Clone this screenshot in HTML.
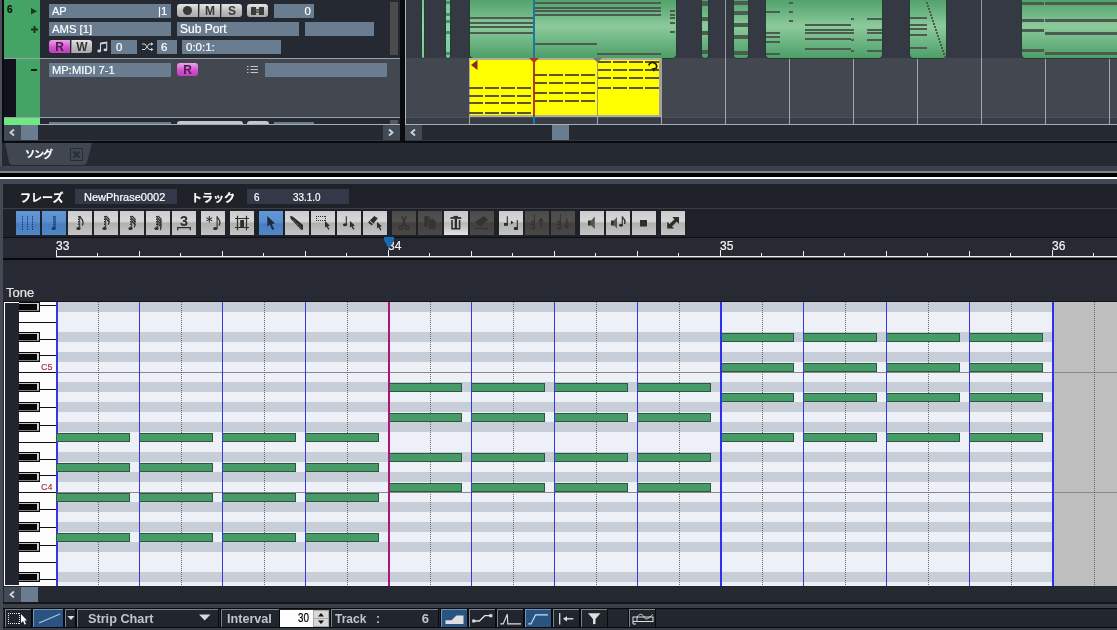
<!DOCTYPE html>
<html lang="ja"><head><meta charset="utf-8"><title>Sequencer</title>
<style>
html,body{margin:0;padding:0;background:#23262e;}
body{width:1117px;height:630px;overflow:hidden;position:relative;font-family:"Liberation Sans","Noto Sans CJK JP",sans-serif;}
#root{position:absolute;left:0;top:0;width:1117px;height:630px;overflow:hidden;background:#23262e;will-change:transform;opacity:.9999;}
#root div{position:absolute;box-sizing:border-box;}
#root svg{position:absolute;overflow:visible;}
.t{color:#fff;font-size:11.5px;line-height:14px;white-space:nowrap;-webkit-text-stroke-width:.2px;}
.fld{background:#6b7d90;}
.btn{border-radius:3px;background:linear-gradient(#e6e6e6,#bdbdbd 55%,#a9a9a9);font-weight:bold;font-size:12px;line-height:14px;overflow:hidden;text-align:center;color:#383838;}
.tb{background:linear-gradient(#cdcdcd 0%,#d8d8d8 42%,#b2b2b2 52%,#c6c6c6 100%);}
.tbh{background:linear-gradient(#c8c8c8 0%,#d0d0d0 42%,#bababa 52%,#e4e4e4 100%);}
.tbb{background:linear-gradient(#6397d6 0%,#5a90d2 45%,#4a80c2 55%,#5088c8 100%);}
.tbd{background:linear-gradient(#4d4a4a 0%,#545151 42%,#444141 52%,#4b4848 100%);}
.bb{background:#22262e;border-left:1px solid #7a828c;border-top:1px solid #7a828c;box-shadow:0 0 0 1px #0a0b0d;}
.bbb{background:#2a5583;border-left:1px solid #6f95bd;border-top:1px solid #6f95bd;box-shadow:0 0 0 1px #0a0b0d;}
.bt{color:#c2c6cb;font-weight:bold;font-size:13px;line-height:18px;white-space:nowrap;}
</style></head>
<body><div id="root">
<div style="left:0px;top:0px;width:2px;height:170px;background:#4b525c;"></div>
<div style="left:2px;top:0px;width:2px;height:143px;background:#0b0c0f;"></div>
<div style="left:4px;top:0px;width:36px;height:58px;background:#45a566;"></div>
<div style="left:40px;top:0px;width:360px;height:58px;background:#262a33;"></div>
<div style="left:4px;top:58px;width:12px;height:60px;background:#10141a;"></div>
<div style="left:16px;top:58px;width:24px;height:60px;background:#45a566;"></div>
<div style="left:40px;top:58px;width:360px;height:60px;background:#434851;"></div>
<div style="left:4px;top:58px;width:396px;height:1px;background:#9aa0a8;"></div>
<div style="left:4px;top:117px;width:396px;height:1px;background:#9aa0a8;"></div>
<div style="left:4px;top:118px;width:36px;height:7px;background:#70e884;"></div>
<div style="left:40px;top:118px;width:360px;height:7px;background:#262a33;"></div>
<div style="left:49px;top:122px;width:122px;height:3px;background:#6b7d90;"></div>
<div style="left:177px;top:121px;width:66px;height:4px;background:#c8c8c8;border-radius:3px 3px 0 0;"></div>
<div style="left:247px;top:121px;width:22px;height:4px;background:#c8c8c8;border-radius:3px 3px 0 0;"></div>
<div style="left:274px;top:122px;width:40px;height:3px;background:#6b7d90;"></div>
<div style="left:390px;top:120px;width:8px;height:4px;background:#5a5a5a;"></div>
<div class="t" style="left:7px;top:3px;color:#0a160c;font-weight:bold;font-size:10px;">6</div>
<svg style="left:31px;top:8px" width="7" height="8"><path d="M0 0 L6 3.300 L0 6.600 Z" fill="#1a3c24"/></svg>
<svg style="left:31px;top:26px" width="7" height="7"><path d="M2.5 0h2v2.5H7v2H4.5V7h-2V4.500H0v-2h2.5z" fill="#163a22"/></svg>
<div style="left:31px;top:69px;width:6px;height:2px;background:#0c2414"></div>
<div style="left:49px;top:4px;width:122px;height:13.5px;background:#6b7d90;"><div class="t" style="left:3px;top:0;font-size:11px">AP</div><div class="t" style="left:109px;top:0">|1</div></div>
<div style="left:49px;top:22px;width:122px;height:13.5px;background:#6b7d90;"><div class="t" style="left:3px;top:0;font-size:11.300px">AMS [1]</div></div>
<div style="left:177px;top:22px;width:122px;height:13.5px;background:#6b7d90;"><div class="t" style="left:3px;top:0;font-size:12px">Sub Port</div></div>
<div style="left:305px;top:22px;width:69px;height:13.5px;background:#6b7d90;"></div>
<div class="btn" style="left:177px;top:4px;width:21px;height:13px;border-radius:3px 0 0 3px;"><div style="left:6px;top:2px;width:9px;height:9px;border-radius:5px;background:#3a3a3a"></div></div>
<div class="btn" style="left:199px;top:4px;width:21px;height:13px;border-radius:0;border-left:1px solid #8a8a8a;">M</div>
<div class="btn" style="left:221px;top:4px;width:21px;height:13px;border-radius:0 3px 3px 0;border-left:1px solid #8a8a8a;">S</div>
<div class="btn" style="left:247px;top:4px;width:21px;height:13px;"><svg style="left:4px;top:3px" width="14" height="8"><path d="M0 0h5v2h3v-2h5v8h-5v-2h-3v2h-5z" fill="#3d3d3d"/><rect x="5" y="2.500" width="3" height="3" fill="#777"/></svg></div>
<div style="left:274px;top:4px;width:40px;height:13.5px;background:#6b7d90;"><div class="t" style="left:0;top:0;width:37px;text-align:right">0</div></div>
<div class="btn" style="left:49px;top:40px;width:21px;height:13px;border-radius:3px 0 0 3px;background:linear-gradient(#e9a6e6,#d04fcf 60%,#c040c0);color:#4a1a4a;">R</div>
<div class="btn" style="left:71px;top:40px;width:21px;height:13px;border-radius:0 3px 3px 0;border-left:1px solid #8a8a8a;">W</div>
<svg style="left:97px;top:41px" width="11" height="12"><path d="M3.500 10 V2.300 L9.700 1.200 V8.800" stroke="#d0d5dc" stroke-width="1.100" fill="none"/><path d="M3.500 2.800 L9.700 1.700" stroke="#d0d5dc" stroke-width="1.600"/><ellipse cx="2.200" cy="10" rx="1.900" ry="1.400" fill="#d0d5dc"/><ellipse cx="8.400" cy="8.900" rx="1.900" ry="1.400" fill="#d0d5dc"/></svg>
<div style="left:111px;top:40px;width:26px;height:13.5px;background:#6b7d90;"><div class="t" style="left:5px;top:0">0</div></div>
<svg style="left:142px;top:42px" width="12" height="10"><path d="M0 2 H3 L7 7.500 H10 M0 7.500 H3 L7 2 H10" stroke="#d0d5dc" stroke-width="1" fill="none"/><path d="M9 0.300 L11.500 2 L9 3.700 Z M9 5.800 L11.500 7.500 L9 9.200 Z" fill="#d0d5dc"/></svg>
<div style="left:157px;top:40px;width:20px;height:13.5px;background:#6b7d90;"><div class="t" style="left:4px;top:0">6</div></div>
<div style="left:182px;top:40px;width:99px;height:13.5px;background:#6b7d90;"><div class="t" style="left:4px;top:0">0:0:1:</div></div>
<div style="left:390px;top:2px;width:8px;height:53px;background:#4c4c4c;"></div>
<div style="left:49px;top:63px;width:122px;height:13.5px;background:#6b7d90;"><div class="t" style="left:3px;top:0;font-size:11.200px">MP:MIDI 7-1</div></div>
<div class="btn" style="left:177px;top:63px;width:21px;height:13px;background:linear-gradient(#e9a6e6,#d04fcf 60%,#c040c0);color:#4a1a4a;">R</div>
<svg style="left:247px;top:65px" width="12" height="10"><path d="M0 1.500h1.500M0 4.500h1.500M0 7.500h1.500M3.500 1.500h7.500M3.500 4.500h7.500M3.500 7.500h7.500" stroke="#c4cad2" stroke-width="1"/></svg>
<div style="left:265px;top:63px;width:122px;height:13.5px;background:#6b7d90;"></div>
<div style="left:40px;top:124px;width:360px;height:1px;background:#a8aeb6;"></div>
<div style="left:4px;top:125px;width:396px;height:16px;background:#262a32;"></div>
<div style="left:4px;top:125px;width:17px;height:15px;background:#434b57;"></div>
<div style="left:21px;top:125px;width:17px;height:15px;background:#6b7d90;"></div>
<div style="left:383px;top:125px;width:17px;height:15px;background:#434b57;"></div>
<div style="left:4px;top:140px;width:396px;height:1px;background:#343941;"></div>
<svg style="left:9px;top:129px" width="7" height="7"><path d="M5 0.500 L1.500 3.500 L5 6.500" stroke="#d0d6de" stroke-width="1.800" fill="none"/></svg>
<svg style="left:388px;top:129px" width="7" height="7"><path d="M1 0.500 L4.500 3.500 L1 6.500" stroke="#d0d6de" stroke-width="1.800" fill="none"/></svg>
<div style="left:400px;top:0px;width:5px;height:143px;background:#0b0c0f;"></div>
<div style="left:405px;top:0px;width:1px;height:125px;background:#b0b4ba;"></div>
<div style="left:406px;top:0px;width:711px;height:58px;background:#353a44;"></div>
<div style="left:406px;top:58px;width:711px;height:60px;background:#434851;"></div>
<div style="left:406px;top:118px;width:711px;height:7px;background:#383d47;"></div>
<div style="left:406px;top:117px;width:711px;height:1px;background:#4c515a;"></div>
<div style="left:469px;top:58px;width:1px;height:67px;background:#a4a8ae;"></div>
<div style="left:533px;top:58px;width:1px;height:67px;background:#a4a8ae;"></div>
<div style="left:597px;top:58px;width:1px;height:67px;background:#a4a8ae;"></div>
<div style="left:661px;top:58px;width:1px;height:67px;background:#a4a8ae;"></div>
<div style="left:725px;top:58px;width:1px;height:67px;background:#a4a8ae;"></div>
<div style="left:789px;top:58px;width:1px;height:67px;background:#a4a8ae;"></div>
<div style="left:853px;top:58px;width:1px;height:67px;background:#a4a8ae;"></div>
<div style="left:917px;top:58px;width:1px;height:67px;background:#a4a8ae;"></div>
<div style="left:981px;top:58px;width:1px;height:67px;background:#a4a8ae;"></div>
<div style="left:1045px;top:58px;width:1px;height:67px;background:#a4a8ae;"></div>
<div style="left:1109px;top:58px;width:1px;height:67px;background:#a4a8ae;"></div>
<div style="left:422px;top:-3px;width:2px;height:60.5px;background:linear-gradient(#74c495 0%,#8ed6ad 50%,#78c898 100%);border-radius:1px;box-shadow:0 0 0 1px #23402e;"></div>
<div style="left:446px;top:-3px;width:4px;height:60.5px;background:linear-gradient(#74c495 0%,#8ed6ad 50%,#78c898 100%);border-radius:2px;box-shadow:0 0 0 1px #23402e;"></div>
<div style="left:446px;top:1px;width:4px;height:3px;background:#4f8c68;"></div>
<div style="left:446px;top:13px;width:4px;height:3px;background:#4f8c68;"></div>
<div style="left:446px;top:20px;width:4px;height:3px;background:#4f8c68;"></div>
<div style="left:446px;top:31px;width:4px;height:3px;background:#4f8c68;"></div>
<div style="left:446px;top:52px;width:4px;height:3px;background:#4f8c68;"></div>
<div style="left:470px;top:-3px;width:206px;height:60.5px;background:linear-gradient(#4f9f68 0%,#6cb583 25%,#8fcb9c 48%,#6cb583 75%,#4f9f68 100%);border-radius:4px;box-shadow:0 0 0 1px #23402e;"></div>
<div style="left:470px;top:17px;width:63px;height:2px;background:#4c5e52;"></div>
<div style="left:470px;top:22px;width:63px;height:2px;background:#4c5e52;"></div>
<div style="left:470px;top:26px;width:63px;height:2px;background:#4c5e52;"></div>
<div style="left:470px;top:32px;width:63px;height:2px;background:#4c5e52;"></div>
<div style="left:535px;top:2px;width:126px;height:2px;background:#4c5e52;"></div>
<div style="left:535px;top:7px;width:126px;height:2px;background:#4c5e52;"></div>
<div style="left:535px;top:10px;width:126px;height:2px;background:#4c5e52;"></div>
<div style="left:535px;top:14px;width:126px;height:2px;background:#4c5e52;"></div>
<div style="left:535px;top:43px;width:62px;height:2px;background:#4c5e52;"></div>
<div style="left:597px;top:53px;width:64px;height:2px;background:#4c5e52;"></div>
<div style="left:670px;top:10px;width:5px;height:2px;background:#4c5e52;"></div>
<div style="left:670px;top:14px;width:5px;height:2px;background:#4c5e52;"></div>
<div style="left:670px;top:17px;width:5px;height:2px;background:#4c5e52;"></div>
<div style="left:670px;top:22px;width:5px;height:2px;background:#4c5e52;"></div>
<div style="left:670px;top:31px;width:5px;height:2px;background:#4c5e52;"></div>
<div style="left:702px;top:-3px;width:6px;height:60.5px;background:linear-gradient(#4f9f68 0%,#6cb583 25%,#8fcb9c 48%,#6cb583 75%,#4f9f68 100%);border-radius:3px;box-shadow:0 0 0 1px #23402e;"></div>
<div style="left:702px;top:1px;width:6px;height:5px;background:#4c5e52;"></div>
<div style="left:702px;top:17px;width:6px;height:4px;background:#4c5e52;"></div>
<div style="left:702px;top:31px;width:6px;height:4px;background:#4c5e52;"></div>
<div style="left:702px;top:50px;width:6px;height:4px;background:#4c5e52;"></div>
<div style="left:734px;top:-3px;width:14px;height:60.5px;background:linear-gradient(#4f9f68 0%,#6cb583 25%,#8fcb9c 48%,#6cb583 75%,#4f9f68 100%);border-radius:3px;box-shadow:0 0 0 1px #23402e;"></div>
<div style="left:734px;top:1px;width:14px;height:4px;background:#4c5e52;"></div>
<div style="left:734px;top:11px;width:14px;height:4px;background:#4c5e52;"></div>
<div style="left:734px;top:23px;width:14px;height:4px;background:#4c5e52;"></div>
<div style="left:734px;top:35px;width:14px;height:4px;background:#4c5e52;"></div>
<div style="left:734px;top:51px;width:14px;height:4px;background:#4c5e52;"></div>
<div style="left:766px;top:-3px;width:116px;height:60.5px;background:linear-gradient(#4f9f68 0%,#6cb583 25%,#8fcb9c 48%,#6cb583 75%,#4f9f68 100%);border-radius:4px;box-shadow:0 0 0 1px #23402e;"></div>
<div style="left:766px;top:11px;width:14px;height:2px;background:#4c5e52;"></div>
<div style="left:766px;top:32px;width:14px;height:2px;background:#4c5e52;"></div>
<div style="left:766px;top:36px;width:14px;height:2px;background:#4c5e52;"></div>
<div style="left:766px;top:41px;width:14px;height:2px;background:#4c5e52;"></div>
<div style="left:766px;top:53px;width:14px;height:2px;background:#4c5e52;"></div>
<div style="left:789px;top:2px;width:4px;height:2px;background:#4c5e52;"></div>
<div style="left:789px;top:11px;width:4px;height:2px;background:#4c5e52;"></div>
<div style="left:789px;top:20px;width:4px;height:2px;background:#4c5e52;"></div>
<div style="left:805px;top:24px;width:46px;height:2px;background:#4c5e52;"></div>
<div style="left:805px;top:29px;width:46px;height:2px;background:#4c5e52;"></div>
<div style="left:805px;top:32px;width:46px;height:2px;background:#4c5e52;"></div>
<div style="left:805px;top:38px;width:46px;height:2px;background:#4c5e52;"></div>
<div style="left:805px;top:48px;width:46px;height:2px;background:#4c5e52;"></div>
<div style="left:851px;top:18px;width:3px;height:2px;background:#4c5e52;"></div>
<div style="left:851px;top:29px;width:3px;height:2px;background:#4c5e52;"></div>
<div style="left:851px;top:32px;width:3px;height:2px;background:#4c5e52;"></div>
<div style="left:851px;top:39px;width:3px;height:2px;background:#4c5e52;"></div>
<div style="left:851px;top:50px;width:3px;height:2px;background:#4c5e52;"></div>
<div style="left:867px;top:18px;width:15px;height:2px;background:#4c5e52;"></div>
<div style="left:867px;top:29px;width:15px;height:2px;background:#4c5e52;"></div>
<div style="left:867px;top:32px;width:15px;height:2px;background:#4c5e52;"></div>
<div style="left:867px;top:39px;width:15px;height:2px;background:#4c5e52;"></div>
<div style="left:867px;top:50px;width:15px;height:2px;background:#4c5e52;"></div>
<div style="left:910px;top:-3px;width:36px;height:60.5px;background:linear-gradient(#4f9f68 0%,#6cb583 25%,#8fcb9c 48%,#6cb583 75%,#4f9f68 100%);border-radius:4px;box-shadow:0 0 0 1px #23402e;"></div>
<div style="left:910px;top:17px;width:17px;height:2px;background:#4c5e52;"></div>
<div style="left:910px;top:24px;width:17px;height:2px;background:#4c5e52;"></div>
<div style="left:910px;top:28px;width:17px;height:2px;background:#4c5e52;"></div>
<div style="left:910px;top:34px;width:17px;height:2px;background:#4c5e52;"></div>
<div style="left:910px;top:47px;width:17px;height:2px;background:#4c5e52;"></div>
<div style="left:926px;top:2px;width:2px;height:2px;background:#4c5e52;"></div>
<div style="left:927px;top:5px;width:2px;height:2px;background:#4c5e52;"></div>
<div style="left:928px;top:8px;width:2px;height:2px;background:#4c5e52;"></div>
<div style="left:929px;top:11px;width:2px;height:2px;background:#4c5e52;"></div>
<div style="left:930px;top:14px;width:2px;height:2px;background:#4c5e52;"></div>
<div style="left:931px;top:17px;width:2px;height:2px;background:#4c5e52;"></div>
<div style="left:932px;top:20px;width:2px;height:2px;background:#4c5e52;"></div>
<div style="left:933px;top:23px;width:2px;height:2px;background:#4c5e52;"></div>
<div style="left:934px;top:26px;width:2px;height:2px;background:#4c5e52;"></div>
<div style="left:935px;top:29px;width:2px;height:2px;background:#4c5e52;"></div>
<div style="left:936px;top:32px;width:2px;height:2px;background:#4c5e52;"></div>
<div style="left:937px;top:35px;width:2px;height:2px;background:#4c5e52;"></div>
<div style="left:938px;top:38px;width:2px;height:2px;background:#4c5e52;"></div>
<div style="left:939px;top:41px;width:2px;height:2px;background:#4c5e52;"></div>
<div style="left:940px;top:44px;width:2px;height:2px;background:#4c5e52;"></div>
<div style="left:941px;top:47px;width:2px;height:2px;background:#4c5e52;"></div>
<div style="left:942px;top:50px;width:2px;height:2px;background:#4c5e52;"></div>
<div style="left:943px;top:53px;width:2px;height:2px;background:#4c5e52;"></div>
<div style="left:944px;top:56px;width:2px;height:2px;background:#4c5e52;"></div>
<div style="left:1022px;top:-3px;width:110px;height:60.5px;background:linear-gradient(#4f9f68 0%,#6cb583 25%,#8fcb9c 48%,#6cb583 75%,#4f9f68 100%);border-radius:4px;box-shadow:0 0 0 1px #23402e;"></div>
<div style="left:1022px;top:2px;width:22px;height:3px;background:#4c5e52;"></div>
<div style="left:1022px;top:19px;width:22px;height:3px;background:#4c5e52;"></div>
<div style="left:1022px;top:29px;width:22px;height:3px;background:#4c5e52;"></div>
<div style="left:1022px;top:49px;width:22px;height:3px;background:#4c5e52;"></div>
<div style="left:1045px;top:2px;width:72px;height:3px;background:#4c5e52;"></div>
<div style="left:1045px;top:19px;width:72px;height:3px;background:#4c5e52;"></div>
<div style="left:1045px;top:32px;width:72px;height:3px;background:#4c5e52;"></div>
<div style="left:1045px;top:52px;width:72px;height:3px;background:#4c5e52;"></div>
<div style="left:725px;top:0px;width:1px;height:58px;background:#9498a0;"></div>
<div style="left:981px;top:0px;width:1px;height:58px;background:#9498a0;"></div>
<div style="left:469px;top:58px;width:193px;height:59px;background:#ffff00;border:1px solid #a8a8a0;border-top:2px solid #b0b09a;border-bottom:2px solid #b0b09a;border-right:3px solid #a4a498;"></div>
<div style="left:469px;top:87px;width:14px;height:2px;background:#5e5622;"></div>
<div style="left:485px;top:87px;width:14px;height:2px;background:#5e5622;"></div>
<div style="left:501px;top:87px;width:14px;height:2px;background:#5e5622;"></div>
<div style="left:517px;top:87px;width:14px;height:2px;background:#5e5622;"></div>
<div style="left:469px;top:95px;width:14px;height:2px;background:#5e5622;"></div>
<div style="left:485px;top:95px;width:14px;height:2px;background:#5e5622;"></div>
<div style="left:501px;top:95px;width:14px;height:2px;background:#5e5622;"></div>
<div style="left:517px;top:95px;width:14px;height:2px;background:#5e5622;"></div>
<div style="left:469px;top:102px;width:14px;height:2px;background:#5e5622;"></div>
<div style="left:485px;top:102px;width:14px;height:2px;background:#5e5622;"></div>
<div style="left:501px;top:102px;width:14px;height:2px;background:#5e5622;"></div>
<div style="left:517px;top:102px;width:14px;height:2px;background:#5e5622;"></div>
<div style="left:469px;top:112px;width:14px;height:2px;background:#5e5622;"></div>
<div style="left:485px;top:112px;width:14px;height:2px;background:#5e5622;"></div>
<div style="left:501px;top:112px;width:14px;height:2px;background:#5e5622;"></div>
<div style="left:517px;top:112px;width:14px;height:2px;background:#5e5622;"></div>
<div style="left:533px;top:74px;width:14px;height:2px;background:#5e5622;"></div>
<div style="left:549px;top:74px;width:14px;height:2px;background:#5e5622;"></div>
<div style="left:565px;top:74px;width:14px;height:2px;background:#5e5622;"></div>
<div style="left:581px;top:74px;width:14px;height:2px;background:#5e5622;"></div>
<div style="left:533px;top:82px;width:14px;height:2px;background:#5e5622;"></div>
<div style="left:549px;top:82px;width:14px;height:2px;background:#5e5622;"></div>
<div style="left:565px;top:82px;width:14px;height:2px;background:#5e5622;"></div>
<div style="left:581px;top:82px;width:14px;height:2px;background:#5e5622;"></div>
<div style="left:533px;top:92px;width:14px;height:2px;background:#5e5622;"></div>
<div style="left:549px;top:92px;width:14px;height:2px;background:#5e5622;"></div>
<div style="left:565px;top:92px;width:14px;height:2px;background:#5e5622;"></div>
<div style="left:581px;top:92px;width:14px;height:2px;background:#5e5622;"></div>
<div style="left:533px;top:100px;width:14px;height:2px;background:#5e5622;"></div>
<div style="left:549px;top:100px;width:14px;height:2px;background:#5e5622;"></div>
<div style="left:565px;top:100px;width:14px;height:2px;background:#5e5622;"></div>
<div style="left:581px;top:100px;width:14px;height:2px;background:#5e5622;"></div>
<div style="left:597px;top:61px;width:14px;height:2px;background:#5e5622;"></div>
<div style="left:613px;top:61px;width:14px;height:2px;background:#5e5622;"></div>
<div style="left:629px;top:61px;width:14px;height:2px;background:#5e5622;"></div>
<div style="left:645px;top:61px;width:14px;height:2px;background:#5e5622;"></div>
<div style="left:597px;top:69px;width:14px;height:2px;background:#5e5622;"></div>
<div style="left:613px;top:69px;width:14px;height:2px;background:#5e5622;"></div>
<div style="left:629px;top:69px;width:14px;height:2px;background:#5e5622;"></div>
<div style="left:645px;top:69px;width:14px;height:2px;background:#5e5622;"></div>
<div style="left:597px;top:77px;width:14px;height:2px;background:#5e5622;"></div>
<div style="left:613px;top:77px;width:14px;height:2px;background:#5e5622;"></div>
<div style="left:629px;top:77px;width:14px;height:2px;background:#5e5622;"></div>
<div style="left:645px;top:77px;width:14px;height:2px;background:#5e5622;"></div>
<div style="left:597px;top:87px;width:14px;height:2px;background:#5e5622;"></div>
<div style="left:613px;top:87px;width:14px;height:2px;background:#5e5622;"></div>
<div style="left:629px;top:87px;width:14px;height:2px;background:#5e5622;"></div>
<div style="left:645px;top:87px;width:14px;height:2px;background:#5e5622;"></div>
<div style="left:597px;top:59px;width:1px;height:57px;background:#9a9a80;"></div>
<div style="left:533px;top:0px;width:2px;height:125px;background:#1a7aa0;"></div>
<div style="left:533px;top:59px;width:2px;height:57px;background:#b83c1c;"></div>
<svg style="left:471px;top:60px" width="7" height="11"><path d="M6.500 0 L0 5 L6.500 10 Z" fill="#8a2a2a"/></svg>
<svg style="left:529px;top:58px" width="10" height="5"><path d="M0 0 H10 L5 5 Z" fill="#c03020"/></svg>
<svg style="left:593px;top:58px" width="9" height="5"><path d="M0 0 H9 L4.500 4.500 Z" fill="#777"/></svg>
<svg style="left:647px;top:60px" width="12" height="12"><path d="M1.800 5.500 A4 3.800 0 1 1 8.500 9" stroke="#1a1a1a" stroke-width="1.700" fill="none"/><path d="M4.500 8.300 L8.800 7.800 L7 11.800 Z" fill="#1a1a1a"/></svg>
<div style="left:405px;top:124px;width:712px;height:1px;background:#a8aeb6;"></div>
<div style="left:405px;top:125px;width:712px;height:16px;background:#262a32;"></div>
<div style="left:405px;top:125px;width:17px;height:15px;background:#434b57;"></div>
<div style="left:552px;top:125px;width:17px;height:15px;background:#6b7d90;"></div>
<div style="left:405px;top:140px;width:712px;height:1px;background:#343941;"></div>
<svg style="left:410px;top:129px" width="7" height="7"><path d="M5 0.500 L1.500 3.500 L5 6.500" stroke="#d0d6de" stroke-width="1.800" fill="none"/></svg>
<div style="left:2px;top:141px;width:1115px;height:2px;background:#0b0c0f;"></div>
<div style="left:2px;top:143px;width:1115px;height:23px;background:#262a32;"></div>
<svg style="left:0;top:143px" width="100" height="23"><path d="M5 0 H92 L87 19 Q86 22 83 22 H13 Q10 22 9 19 Z" fill="#414851"/><rect x="70.500" y="5.500" width="12" height="12" fill="none" stroke="#2a2f37"/><path d="M73.500 8.500 L79.500 14.500 M79.500 8.500 L73.500 14.500" stroke="#2a2f37" stroke-width="2"/></svg>
<div class="t" style="left:25px;top:148px;font-size:10px;line-height:14px;letter-spacing:-1px;font-weight:bold">ソング</div>
<div style="left:0px;top:166px;width:1117px;height:5px;background:#3c434c;"></div>
<div style="left:0px;top:171px;width:1117px;height:2px;background:#7c8894;"></div>
<div style="left:0px;top:173px;width:1117px;height:4px;background:#000;"></div>
<div style="left:0px;top:177px;width:1117px;height:2px;background:#fff;"></div>
<div style="left:0px;top:179px;width:1117px;height:5px;background:#434b55;"></div>
<div style="left:0px;top:184px;width:3px;height:446px;background:#454c56;"></div>
<div style="left:3px;top:184px;width:1114px;height:446px;background:#23262e;"></div>
<div style="left:3px;top:184px;width:1114px;height:54px;background:#1f2229;"></div>
<div class="t" style="left:20px;top:191px;font-size:11px;font-weight:bold;letter-spacing:0px;">フレーズ</div>
<div style="left:75px;top:189px;width:102px;height:15px;background:#343a4a;"><div class="t" style="left:9px;top:1px;font-size:11px;line-height:15px;">NewPhrase0002</div></div>
<div class="t" style="left:191px;top:191px;font-size:11px;font-weight:bold;">トラック</div>
<div style="left:247px;top:189px;width:102px;height:15px;background:#343a4a;"><div class="t" style="left:7px;top:1px;font-size:11px;line-height:15px;transform:scaleX(.9);transform-origin:0 0;">6</div><div class="t" style="left:46px;top:1px;font-size:11px;line-height:15px;transform:scaleX(.9);transform-origin:0 0;">33.1.0</div></div>
<div style="left:3px;top:208px;width:1114px;height:1px;background:#3a3f48;"></div>
<div style="left:3px;top:237px;width:1114px;height:1px;background:#0e0f13;"></div>
<div style="left:3px;top:259px;width:1114px;height:1px;background:#0e0f13;"></div>
<div class="tbb" style="left:16px;top:211px;width:24px;height:24px;"><svg width="24" height="24" style="left:0;top:0"><path d="M6.500 5v14.500M11.500 5v14.500M16.500 5v14.500" stroke="#1d3a68" stroke-width="1" stroke-dasharray="1.500 1"/></svg></div>
<div class="tbb" style="left:42px;top:211px;width:24px;height:24px;"><svg width="24" height="24" style="left:0;top:0"><path d="M11.500 5v12" stroke="#1d3a68" stroke-width="1" stroke-dasharray="1.500 1"/><path d="M13 5v12.500" stroke="#1d3a68" stroke-width="1.200"/><ellipse cx="11.700" cy="17.600" rx="2.100" ry="1.500" fill="#1d3a68"/></svg></div>
<div class="tb" style="left:68px;top:211px;width:24px;height:24px;"><svg width="24" height="24" style="left:0;top:0"><path d="M10.500 5v10.500" stroke="#2e2e2e" stroke-width="1" stroke-dasharray="1.500 1"/><path d="M11.700 5v12" stroke="#2e2e2e" stroke-width="1"/><ellipse cx="10.500" cy="17.400" rx="2.100" ry="1.500" fill="#2e2e2e"/><path d="M12 5.200 C12.500 8 17 9 14.300 14.500" stroke="#2e2e2e" stroke-width="1.300" fill="none"/></svg></div>
<div class="tb" style="left:94px;top:211px;width:24px;height:24px;"><svg width="24" height="24" style="left:0;top:0"><path d="M10.500 5v10.500" stroke="#2e2e2e" stroke-width="1" stroke-dasharray="1.500 1"/><path d="M11.700 5v12" stroke="#2e2e2e" stroke-width="1"/><ellipse cx="10.500" cy="17.400" rx="2.100" ry="1.500" fill="#2e2e2e"/><path d="M12 4.8 L15.200 8.4 L14.300 11.2" stroke="#2e2e2e" stroke-width="1.200" fill="none"/><path d="M12 7.4 L15.200 11.0 L14.300 13.8" stroke="#2e2e2e" stroke-width="1.200" fill="none"/></svg></div>
<div class="tb" style="left:120px;top:211px;width:24px;height:24px;"><svg width="24" height="24" style="left:0;top:0"><path d="M10.500 5v10.500" stroke="#2e2e2e" stroke-width="1" stroke-dasharray="1.500 1"/><path d="M11.700 5v12" stroke="#2e2e2e" stroke-width="1"/><ellipse cx="10.500" cy="17.400" rx="2.100" ry="1.500" fill="#2e2e2e"/><path d="M12 4.8 L15.200 8.4 L14.300 11.2" stroke="#2e2e2e" stroke-width="1.200" fill="none"/><path d="M12 7.4 L15.200 11.0 L14.300 13.8" stroke="#2e2e2e" stroke-width="1.200" fill="none"/><path d="M12 10.0 L15.200 13.6 L14.300 16.4" stroke="#2e2e2e" stroke-width="1.200" fill="none"/></svg></div>
<div class="tb" style="left:146px;top:211px;width:24px;height:24px;"><svg width="24" height="24" style="left:0;top:0"><path d="M10.500 5v10.500" stroke="#2e2e2e" stroke-width="1" stroke-dasharray="1.500 1"/><path d="M11.700 5v12" stroke="#2e2e2e" stroke-width="1"/><ellipse cx="10.500" cy="17.400" rx="2.100" ry="1.500" fill="#2e2e2e"/><path d="M12 4.8 L15.200 8.4 L14.300 11.2" stroke="#2e2e2e" stroke-width="1.200" fill="none"/><path d="M12 7.4 L15.200 11.0 L14.300 13.8" stroke="#2e2e2e" stroke-width="1.200" fill="none"/><path d="M12 10.0 L15.200 13.6 L14.300 16.4" stroke="#2e2e2e" stroke-width="1.200" fill="none"/><path d="M12 12.6 L15.200 16.2 L14.300 19.0" stroke="#2e2e2e" stroke-width="1.200" fill="none"/></svg></div>
<div class="tb" style="left:172px;top:211px;width:24px;height:24px;"><svg width="24" height="24" style="left:0;top:0"><text x="12" y="14.500" font-size="14.500" font-weight="bold" text-anchor="middle" fill="#2e2e2e" font-family="Liberation Sans,sans-serif">3</text><path d="M5.700 19.200V16.700h12.600V19.200" stroke="#2e2e2e" stroke-width="1.300" fill="none"/></svg></div>
<div class="tb" style="left:201px;top:211px;width:24px;height:24px;"><svg width="24" height="24" style="left:0;top:0"><path d="M8.300 5v6.500M5.300 6.700l6 3.200M11.300 6.700l-6 3.200" stroke="#2e2e2e" stroke-width="1"/><path d="M16.100 5.500v12" stroke="#2e2e2e" stroke-width="1.100"/><ellipse cx="14.300" cy="17.500" rx="2.300" ry="1.500" fill="#2e2e2e"/><path d="M16.200 5.500 C16.500 8.500 21 9 18 14.500" stroke="#2e2e2e" stroke-width="1.300" fill="none"/></svg></div>
<div class="tb" style="left:230px;top:211px;width:24px;height:24px;"><svg width="24" height="24" style="left:0;top:0"><path d="M5 7.500h14M5 16.500h14M7.500 4.800v14.400M16.500 4.800v14.400" stroke="#2e2e2e" stroke-width="1.200"/><rect x="10.200" y="9" width="3.800" height="7" fill="#2e2e2e"/></svg></div>
<div class="tbb" style="left:259px;top:211px;width:24px;height:24px;"><svg width="24" height="24" style="left:0;top:0"><path d="M8.300 5 L8.300 15.800 L10.700 13.600 L13.300 19 L15.200 18.100 L12.700 12.900 L16 12.400 Z" fill="#23283a"/></svg></div>
<div class="tb" style="left:285px;top:211px;width:24px;height:24px;"><svg width="24" height="24" style="left:0;top:0"><path d="M5 5 L7.800 5.600 L18 14 V18.700 H16 L5.600 7.800 Z" fill="#2e2e2e"/><path d="M8 9 L16.500 17.800" stroke="#999" stroke-width=".8" stroke-dasharray="1 1"/></svg></div>
<div class="tb" style="left:311px;top:211px;width:24px;height:24px;"><svg width="24" height="24" style="left:0;top:0"><path d="M5 5.500h10M5 9.500h10" stroke="#2e2e2e" stroke-width="1" stroke-dasharray="1 1" shape-rendering="crispEdges"/><path d="M5.500 5v5M14.500 5v5" stroke="#2e2e2e" stroke-width="1" stroke-dasharray="1 1" shape-rendering="crispEdges"/><path d="M14 10 L14 16.8 L15.6 15.4 L17.2 18.8 L18.4 18.2 L16.9 15 L19 14.7 Z" fill="#2e2e2e"/></svg></div>
<div class="tb" style="left:337px;top:211px;width:24px;height:24px;"><svg width="24" height="24" style="left:0;top:0"><path d="M9.300 5.200v9" stroke="#2e2e2e" stroke-width="1.100"/><ellipse cx="8" cy="13.800" rx="2.100" ry="1.500" fill="#2e2e2e"/><path d="M13 10 L13 16.8 L14.6 15.4 L16.2 18.8 L17.4 18.2 L15.9 15 L18 14.7 Z" fill="#2e2e2e"/></svg></div>
<div class="tb" style="left:363px;top:211px;width:24px;height:24px;"><svg width="24" height="24" style="left:0;top:0"><path d="M11.200 5 L14.800 7.300 L8.800 14.600 L5 11.600 Z" fill="#2e2e2e"/><path d="M6.800 10 L10.300 12.800" stroke="#ddd" stroke-width=".9"/><path d="M14 10.8 L14 17.6 L15.6 16.200000000000003 L17.2 19.6 L18.4 19.0 L16.9 15.8 L19 15.5 Z" fill="#2e2e2e"/></svg></div>
<div class="tbd" style="left:392px;top:211px;width:24px;height:24px;"><svg width="24" height="24" style="left:0;top:0"><path d="M10 5.200 L13.400 15 M14 5.200 L10.600 15" stroke="#353333" stroke-width="1.500"/><circle cx="9" cy="16.600" r="1.800" fill="none" stroke="#353333" stroke-width="1.300"/><circle cx="15.200" cy="16.600" r="1.800" fill="none" stroke="#353333" stroke-width="1.300"/></svg></div>
<div class="tbd" style="left:418px;top:211px;width:24px;height:24px;"><svg width="24" height="24" style="left:0;top:0"><path d="M6.300 5.200h4.200l1.800 1.800v8.500h-6z" fill="#353333"/><path d="M10.500 8h4.800l2.700 2.700v7.500h-7.500z" fill="#353333" stroke="#4b4848" stroke-width=".7"/></svg></div>
<div class="tbh" style="left:444px;top:211px;width:24px;height:24px;"><svg width="24" height="24" style="left:0;top:0"><path d="M6.500 7h10.700" stroke="#2e2e2e" stroke-width="1.800"/><path d="M9.500 5.500h4.500" stroke="#2e2e2e" stroke-width="1.200"/><path d="M8 9v8.800h7.600V9" stroke="#2e2e2e" stroke-width="1.600" fill="none"/><rect x="10.700" y="7.500" width="2.300" height="10.500" fill="#2e2e2e"/></svg></div>
<div class="tbd" style="left:470px;top:211px;width:24px;height:24px;"><svg width="24" height="24" style="left:0;top:0"><path d="M14 5 L18 9 L10.500 15.500 L5 11 Z" fill="#353333"/><path d="M4.500 17.500h13.500" stroke="#353333" stroke-width="1.200"/></svg></div>
<div class="tb" style="left:499px;top:211px;width:24px;height:24px;"><svg width="24" height="24" style="left:0;top:0"><path d="M8.300 5.200v9" stroke="#2e2e2e" stroke-width="1.100"/><rect x="5" y="12" width="3.800" height="2.800" fill="#2e2e2e"/><path d="M12 9.500 l2.600 2 l-2.600 2z" fill="#2e2e2e"/><path d="M18.300 9v9.500" stroke="#2e2e2e" stroke-width="1.100"/><rect x="15" y="16" width="3.800" height="3" fill="#2e2e2e"/></svg></div>
<div class="tbd" style="left:525px;top:211px;width:24px;height:24px;"><svg width="24" height="24" style="left:0;top:0"><path d="M9.300 3v16" stroke="#353333" stroke-width="1"/><path d="M6.300 10.700h3M6.300 13.700h3M6.300 17.500h3" stroke="#353333" stroke-width="1.700"/><path d="M15.900 16.500V8M13.600 10.600l2.300-2.800l2.300 2.800" stroke="#353333" stroke-width="1.300" fill="none"/></svg></div>
<div class="tbd" style="left:551px;top:211px;width:24px;height:24px;"><svg width="24" height="24" style="left:0;top:0"><path d="M9.300 3v16" stroke="#353333" stroke-width="1"/><path d="M6.300 10.700h3M6.300 13.700h3M6.300 17.500h3" stroke="#353333" stroke-width="1.700"/><path d="M15.900 7.500v9M13.600 13.900l2.300 2.800l2.300-2.800" stroke="#353333" stroke-width="1.300" fill="none"/></svg></div>
<div class="tb" style="left:580px;top:211px;width:24px;height:24px;"><svg width="24" height="24" style="left:0;top:0"><rect x="8" y="9.500" width="3.300" height="5" fill="#2e2e2e"/><path d="M10.500 10.200 L14.800 5.500 V18 L10.500 13.800 Z" fill="#555"/></svg></div>
<div class="tb" style="left:606px;top:211px;width:24px;height:24px;"><svg width="24" height="24" style="left:0;top:0"><rect x="5" y="9.500" width="3" height="5" fill="#2e2e2e"/><path d="M7.500 10 L11 6 V17.500 L7.500 14 Z" fill="#555"/><path d="M16.300 5.500v9" stroke="#2e2e2e" stroke-width="1.100"/><ellipse cx="15" cy="14.300" rx="2" ry="1.400" fill="#2e2e2e"/><path d="M16.400 5.500 C16.600 8 21 8.500 18.500 13" stroke="#2e2e2e" stroke-width="1.200" fill="none"/></svg></div>
<div class="tb" style="left:632px;top:211px;width:24px;height:24px;"><svg width="24" height="24" style="left:0;top:0"><rect x="8" y="9" width="7" height="6.500" fill="#2e2e2e"/></svg></div>
<div class="tb" style="left:661px;top:211px;width:24px;height:24px;"><svg width="24" height="24" style="left:0;top:0"><path d="M11.200 6 H18 V13 Z M6.200 10.800 V17.500 H13.200 Z" fill="#2e2e2e"/><path d="M8.500 15.500 L16 8" stroke="#2e2e2e" stroke-width="3.200"/></svg></div>
<div style="left:3px;top:238px;width:1114px;height:21px;background:#282b33;"></div>
<div style="left:3px;top:260px;width:1114px;height:41px;background:#282b33;"></div>
<div style="left:3px;top:301px;width:1114px;height:1px;background:#14161a;"></div>
<div style="left:56px;top:256px;width:1061px;height:1px;background:#f0f0f0;"></div>
<div style="left:56px;top:257px;width:1061px;height:1px;background:#6a6c70;"></div>
<div style="left:3px;top:258px;width:1114px;height:2px;background:#0a0b0e;"></div>
<div style="left:56px;top:250px;width:1px;height:7px;background:#f0f0f0;"></div>
<div class="t" style="left:56px;top:240px;font-size:12px;line-height:12px;color:#f4f4f4;">33</div>
<div style="left:97px;top:253px;width:1px;height:4px;background:#f0f0f0;"></div>
<div style="left:139px;top:251px;width:1px;height:6px;background:#f0f0f0;"></div>
<div style="left:180px;top:253px;width:1px;height:4px;background:#f0f0f0;"></div>
<div style="left:222px;top:251px;width:1px;height:6px;background:#f0f0f0;"></div>
<div style="left:263px;top:253px;width:1px;height:4px;background:#f0f0f0;"></div>
<div style="left:305px;top:251px;width:1px;height:6px;background:#f0f0f0;"></div>
<div style="left:346px;top:253px;width:1px;height:4px;background:#f0f0f0;"></div>
<div style="left:388px;top:250px;width:1px;height:7px;background:#f0f0f0;"></div>
<div class="t" style="left:388px;top:240px;font-size:12px;line-height:12px;color:#f4f4f4;">34</div>
<div style="left:429px;top:253px;width:1px;height:4px;background:#f0f0f0;"></div>
<div style="left:471px;top:251px;width:1px;height:6px;background:#f0f0f0;"></div>
<div style="left:512px;top:253px;width:1px;height:4px;background:#f0f0f0;"></div>
<div style="left:554px;top:251px;width:1px;height:6px;background:#f0f0f0;"></div>
<div style="left:595px;top:253px;width:1px;height:4px;background:#f0f0f0;"></div>
<div style="left:637px;top:251px;width:1px;height:6px;background:#f0f0f0;"></div>
<div style="left:678px;top:253px;width:1px;height:4px;background:#f0f0f0;"></div>
<div style="left:720px;top:250px;width:1px;height:7px;background:#f0f0f0;"></div>
<div class="t" style="left:720px;top:240px;font-size:12px;line-height:12px;color:#f4f4f4;">35</div>
<div style="left:761px;top:253px;width:1px;height:4px;background:#f0f0f0;"></div>
<div style="left:803px;top:251px;width:1px;height:6px;background:#f0f0f0;"></div>
<div style="left:844px;top:253px;width:1px;height:4px;background:#f0f0f0;"></div>
<div style="left:886px;top:251px;width:1px;height:6px;background:#f0f0f0;"></div>
<div style="left:927px;top:253px;width:1px;height:4px;background:#f0f0f0;"></div>
<div style="left:969px;top:251px;width:1px;height:6px;background:#f0f0f0;"></div>
<div style="left:1010px;top:253px;width:1px;height:4px;background:#f0f0f0;"></div>
<div style="left:1052px;top:250px;width:1px;height:7px;background:#f0f0f0;"></div>
<div class="t" style="left:1052px;top:240px;font-size:12px;line-height:12px;color:#f4f4f4;">36</div>
<div style="left:1093px;top:253px;width:1px;height:4px;background:#f0f0f0;"></div>
<svg style="left:384px;top:237px" width="10" height="12"><path d="M0 0 H10 V3 L5 12 L0 3 Z" fill="#1c6cb4"/></svg>
<div class="t" style="left:6px;top:286px;font-size:13px;line-height:14px;color:#e8e8e8;">Tone</div>
<div style="left:56px;top:302px;width:996px;height:284px;background:#eef1f8;"></div>
<div style="left:1052px;top:302px;width:65px;height:284px;background:#c0c0c0;"></div>
<div style="left:56px;top:302px;width:996px;height:10px;background:#c9cfd9;"></div>
<div style="left:56px;top:332px;width:996px;height:10px;background:#c9cfd9;"></div>
<div style="left:56px;top:352px;width:996px;height:10px;background:#c9cfd9;"></div>
<div style="left:56px;top:382px;width:996px;height:10px;background:#c9cfd9;"></div>
<div style="left:56px;top:402px;width:996px;height:10px;background:#c9cfd9;"></div>
<div style="left:56px;top:422px;width:996px;height:10px;background:#c9cfd9;"></div>
<div style="left:56px;top:452px;width:996px;height:10px;background:#c9cfd9;"></div>
<div style="left:56px;top:472px;width:996px;height:10px;background:#c9cfd9;"></div>
<div style="left:56px;top:502px;width:996px;height:10px;background:#c9cfd9;"></div>
<div style="left:56px;top:522px;width:996px;height:10px;background:#c9cfd9;"></div>
<div style="left:56px;top:542px;width:996px;height:10px;background:#c9cfd9;"></div>
<div style="left:56px;top:572px;width:996px;height:10px;background:#c9cfd9;"></div>
<div style="left:56px;top:372px;width:1061px;height:1px;background:#8a8a8a;"></div>
<div style="left:56px;top:492px;width:1061px;height:1px;background:#8a8a8a;"></div>
<div style="left:98px;top:302px;width:1px;height:284px;background:repeating-linear-gradient(#6a6a6a 0 1px,transparent 1px 2px);"></div>
<div style="left:181px;top:302px;width:1px;height:284px;background:repeating-linear-gradient(#6a6a6a 0 1px,transparent 1px 2px);"></div>
<div style="left:264px;top:302px;width:1px;height:284px;background:repeating-linear-gradient(#6a6a6a 0 1px,transparent 1px 2px);"></div>
<div style="left:347px;top:302px;width:1px;height:284px;background:repeating-linear-gradient(#6a6a6a 0 1px,transparent 1px 2px);"></div>
<div style="left:430px;top:302px;width:1px;height:284px;background:repeating-linear-gradient(#6a6a6a 0 1px,transparent 1px 2px);"></div>
<div style="left:513px;top:302px;width:1px;height:284px;background:repeating-linear-gradient(#6a6a6a 0 1px,transparent 1px 2px);"></div>
<div style="left:596px;top:302px;width:1px;height:284px;background:repeating-linear-gradient(#6a6a6a 0 1px,transparent 1px 2px);"></div>
<div style="left:679px;top:302px;width:1px;height:284px;background:repeating-linear-gradient(#6a6a6a 0 1px,transparent 1px 2px);"></div>
<div style="left:762px;top:302px;width:1px;height:284px;background:repeating-linear-gradient(#6a6a6a 0 1px,transparent 1px 2px);"></div>
<div style="left:845px;top:302px;width:1px;height:284px;background:repeating-linear-gradient(#6a6a6a 0 1px,transparent 1px 2px);"></div>
<div style="left:928px;top:302px;width:1px;height:284px;background:repeating-linear-gradient(#6a6a6a 0 1px,transparent 1px 2px);"></div>
<div style="left:1011px;top:302px;width:1px;height:284px;background:repeating-linear-gradient(#6a6a6a 0 1px,transparent 1px 2px);"></div>
<div style="left:1094px;top:302px;width:1px;height:284px;background:repeating-linear-gradient(#6a6a6a 0 1px,transparent 1px 2px);"></div>
<div style="left:55.4px;top:302px;width:2.6px;height:284px;background:#3838dc;"></div>
<div style="left:56px;top:433px;width:74px;height:9px;background:#489c69;border:1px solid #2c5a3e;"></div>
<div style="left:56px;top:463px;width:74px;height:9px;background:#489c69;border:1px solid #2c5a3e;"></div>
<div style="left:56px;top:493px;width:74px;height:9px;background:#489c69;border:1px solid #2c5a3e;"></div>
<div style="left:56px;top:533px;width:74px;height:9px;background:#489c69;border:1px solid #2c5a3e;"></div>
<div style="left:139px;top:433px;width:74px;height:9px;background:#489c69;border:1px solid #2c5a3e;"></div>
<div style="left:139px;top:463px;width:74px;height:9px;background:#489c69;border:1px solid #2c5a3e;"></div>
<div style="left:139px;top:493px;width:74px;height:9px;background:#489c69;border:1px solid #2c5a3e;"></div>
<div style="left:139px;top:533px;width:74px;height:9px;background:#489c69;border:1px solid #2c5a3e;"></div>
<div style="left:222px;top:433px;width:74px;height:9px;background:#489c69;border:1px solid #2c5a3e;"></div>
<div style="left:222px;top:463px;width:74px;height:9px;background:#489c69;border:1px solid #2c5a3e;"></div>
<div style="left:222px;top:493px;width:74px;height:9px;background:#489c69;border:1px solid #2c5a3e;"></div>
<div style="left:222px;top:533px;width:74px;height:9px;background:#489c69;border:1px solid #2c5a3e;"></div>
<div style="left:305px;top:433px;width:74px;height:9px;background:#489c69;border:1px solid #2c5a3e;"></div>
<div style="left:305px;top:463px;width:74px;height:9px;background:#489c69;border:1px solid #2c5a3e;"></div>
<div style="left:305px;top:493px;width:74px;height:9px;background:#489c69;border:1px solid #2c5a3e;"></div>
<div style="left:305px;top:533px;width:74px;height:9px;background:#489c69;border:1px solid #2c5a3e;"></div>
<div style="left:388px;top:383px;width:74px;height:9px;background:#489c69;border:1px solid #2c5a3e;"></div>
<div style="left:388px;top:413px;width:74px;height:9px;background:#489c69;border:1px solid #2c5a3e;"></div>
<div style="left:388px;top:453px;width:74px;height:9px;background:#489c69;border:1px solid #2c5a3e;"></div>
<div style="left:388px;top:483px;width:74px;height:9px;background:#489c69;border:1px solid #2c5a3e;"></div>
<div style="left:471px;top:383px;width:74px;height:9px;background:#489c69;border:1px solid #2c5a3e;"></div>
<div style="left:471px;top:413px;width:74px;height:9px;background:#489c69;border:1px solid #2c5a3e;"></div>
<div style="left:471px;top:453px;width:74px;height:9px;background:#489c69;border:1px solid #2c5a3e;"></div>
<div style="left:471px;top:483px;width:74px;height:9px;background:#489c69;border:1px solid #2c5a3e;"></div>
<div style="left:554px;top:383px;width:74px;height:9px;background:#489c69;border:1px solid #2c5a3e;"></div>
<div style="left:554px;top:413px;width:74px;height:9px;background:#489c69;border:1px solid #2c5a3e;"></div>
<div style="left:554px;top:453px;width:74px;height:9px;background:#489c69;border:1px solid #2c5a3e;"></div>
<div style="left:554px;top:483px;width:74px;height:9px;background:#489c69;border:1px solid #2c5a3e;"></div>
<div style="left:637px;top:383px;width:74px;height:9px;background:#489c69;border:1px solid #2c5a3e;"></div>
<div style="left:637px;top:413px;width:74px;height:9px;background:#489c69;border:1px solid #2c5a3e;"></div>
<div style="left:637px;top:453px;width:74px;height:9px;background:#489c69;border:1px solid #2c5a3e;"></div>
<div style="left:637px;top:483px;width:74px;height:9px;background:#489c69;border:1px solid #2c5a3e;"></div>
<div style="left:720px;top:333px;width:74px;height:9px;background:#489c69;border:1px solid #2c5a3e;"></div>
<div style="left:720px;top:363px;width:74px;height:9px;background:#489c69;border:1px solid #2c5a3e;"></div>
<div style="left:720px;top:393px;width:74px;height:9px;background:#489c69;border:1px solid #2c5a3e;"></div>
<div style="left:720px;top:433px;width:74px;height:9px;background:#489c69;border:1px solid #2c5a3e;"></div>
<div style="left:803px;top:333px;width:74px;height:9px;background:#489c69;border:1px solid #2c5a3e;"></div>
<div style="left:803px;top:363px;width:74px;height:9px;background:#489c69;border:1px solid #2c5a3e;"></div>
<div style="left:803px;top:393px;width:74px;height:9px;background:#489c69;border:1px solid #2c5a3e;"></div>
<div style="left:803px;top:433px;width:74px;height:9px;background:#489c69;border:1px solid #2c5a3e;"></div>
<div style="left:886px;top:333px;width:74px;height:9px;background:#489c69;border:1px solid #2c5a3e;"></div>
<div style="left:886px;top:363px;width:74px;height:9px;background:#489c69;border:1px solid #2c5a3e;"></div>
<div style="left:886px;top:393px;width:74px;height:9px;background:#489c69;border:1px solid #2c5a3e;"></div>
<div style="left:886px;top:433px;width:74px;height:9px;background:#489c69;border:1px solid #2c5a3e;"></div>
<div style="left:969px;top:333px;width:74px;height:9px;background:#489c69;border:1px solid #2c5a3e;"></div>
<div style="left:969px;top:363px;width:74px;height:9px;background:#489c69;border:1px solid #2c5a3e;"></div>
<div style="left:969px;top:393px;width:74px;height:9px;background:#489c69;border:1px solid #2c5a3e;"></div>
<div style="left:969px;top:433px;width:74px;height:9px;background:#489c69;border:1px solid #2c5a3e;"></div>
<div style="left:139px;top:302px;width:1px;height:284px;background:#3838e0;"></div>
<div style="left:222px;top:302px;width:1px;height:284px;background:#3838e0;"></div>
<div style="left:305px;top:302px;width:1px;height:284px;background:#3838e0;"></div>
<div style="left:388px;top:302px;width:2px;height:284px;background:#b0147c;"></div>
<div style="left:471px;top:302px;width:1px;height:284px;background:#3838e0;"></div>
<div style="left:554px;top:302px;width:1px;height:284px;background:#3838e0;"></div>
<div style="left:637px;top:302px;width:1px;height:284px;background:#3838e0;"></div>
<div style="left:720px;top:302px;width:2px;height:284px;background:#3030f0;"></div>
<div style="left:803px;top:302px;width:1px;height:284px;background:#3838e0;"></div>
<div style="left:886px;top:302px;width:1px;height:284px;background:#3838e0;"></div>
<div style="left:969px;top:302px;width:1px;height:284px;background:#3838e0;"></div>
<div style="left:1052px;top:302px;width:2px;height:284px;background:#3030f0;"></div>
<div style="left:4px;top:302px;width:52px;height:284px;background:#fdfdfd;"></div>
<div style="left:4px;top:302px;width:1px;height:284px;background:#fff;"></div>
<div style="left:5px;top:303px;width:14px;height:282px;background:#23262e;"></div>
<div style="left:5px;top:585px;width:14px;height:1px;background:#fff;"></div>
<div style="left:19px;top:372px;width:37px;height:1px;background:#111;"></div>
<div style="left:40px;top:355px;width:16px;height:1px;background:#111;"></div>
<div style="left:40px;top:339px;width:16px;height:1px;background:#111;"></div>
<div style="left:19px;top:322px;width:37px;height:1px;background:#111;"></div>
<div style="left:40px;top:305px;width:16px;height:1px;background:#111;"></div>
<div style="left:19px;top:492px;width:37px;height:1px;background:#111;"></div>
<div style="left:40px;top:475px;width:16px;height:1px;background:#111;"></div>
<div style="left:40px;top:459px;width:16px;height:1px;background:#111;"></div>
<div style="left:19px;top:442px;width:37px;height:1px;background:#111;"></div>
<div style="left:40px;top:425px;width:16px;height:1px;background:#111;"></div>
<div style="left:40px;top:407px;width:16px;height:1px;background:#111;"></div>
<div style="left:40px;top:389px;width:16px;height:1px;background:#111;"></div>
<div style="left:40px;top:579px;width:16px;height:1px;background:#111;"></div>
<div style="left:19px;top:562px;width:37px;height:1px;background:#111;"></div>
<div style="left:40px;top:545px;width:16px;height:1px;background:#111;"></div>
<div style="left:40px;top:527px;width:16px;height:1px;background:#111;"></div>
<div style="left:40px;top:509px;width:16px;height:1px;background:#111;"></div>
<div style="left:19px;top:302px;width:21px;height:10px;background:#080808;"></div>
<div style="left:19px;top:303px;width:19px;height:1px;background:#c4c4c4;"></div>
<div style="left:37px;top:303px;width:1.5px;height:8px;background:#d0d0d0;"></div>
<div style="left:19px;top:310px;width:19.5px;height:1px;background:#808080;"></div>
<div style="left:19px;top:332px;width:21px;height:10px;background:#080808;"></div>
<div style="left:19px;top:333px;width:19px;height:1px;background:#c4c4c4;"></div>
<div style="left:37px;top:333px;width:1.5px;height:8px;background:#d0d0d0;"></div>
<div style="left:19px;top:340px;width:19.5px;height:1px;background:#808080;"></div>
<div style="left:19px;top:352px;width:21px;height:10px;background:#080808;"></div>
<div style="left:19px;top:353px;width:19px;height:1px;background:#c4c4c4;"></div>
<div style="left:37px;top:353px;width:1.5px;height:8px;background:#d0d0d0;"></div>
<div style="left:19px;top:360px;width:19.5px;height:1px;background:#808080;"></div>
<div style="left:19px;top:382px;width:21px;height:10px;background:#080808;"></div>
<div style="left:19px;top:383px;width:19px;height:1px;background:#c4c4c4;"></div>
<div style="left:37px;top:383px;width:1.5px;height:8px;background:#d0d0d0;"></div>
<div style="left:19px;top:390px;width:19.5px;height:1px;background:#808080;"></div>
<div style="left:19px;top:402px;width:21px;height:10px;background:#080808;"></div>
<div style="left:19px;top:403px;width:19px;height:1px;background:#c4c4c4;"></div>
<div style="left:37px;top:403px;width:1.5px;height:8px;background:#d0d0d0;"></div>
<div style="left:19px;top:410px;width:19.5px;height:1px;background:#808080;"></div>
<div style="left:19px;top:422px;width:21px;height:10px;background:#080808;"></div>
<div style="left:19px;top:423px;width:19px;height:1px;background:#c4c4c4;"></div>
<div style="left:37px;top:423px;width:1.5px;height:8px;background:#d0d0d0;"></div>
<div style="left:19px;top:430px;width:19.5px;height:1px;background:#808080;"></div>
<div style="left:19px;top:452px;width:21px;height:10px;background:#080808;"></div>
<div style="left:19px;top:453px;width:19px;height:1px;background:#c4c4c4;"></div>
<div style="left:37px;top:453px;width:1.5px;height:8px;background:#d0d0d0;"></div>
<div style="left:19px;top:460px;width:19.5px;height:1px;background:#808080;"></div>
<div style="left:19px;top:472px;width:21px;height:10px;background:#080808;"></div>
<div style="left:19px;top:473px;width:19px;height:1px;background:#c4c4c4;"></div>
<div style="left:37px;top:473px;width:1.5px;height:8px;background:#d0d0d0;"></div>
<div style="left:19px;top:480px;width:19.5px;height:1px;background:#808080;"></div>
<div style="left:19px;top:502px;width:21px;height:10px;background:#080808;"></div>
<div style="left:19px;top:503px;width:19px;height:1px;background:#c4c4c4;"></div>
<div style="left:37px;top:503px;width:1.5px;height:8px;background:#d0d0d0;"></div>
<div style="left:19px;top:510px;width:19.5px;height:1px;background:#808080;"></div>
<div style="left:19px;top:522px;width:21px;height:10px;background:#080808;"></div>
<div style="left:19px;top:523px;width:19px;height:1px;background:#c4c4c4;"></div>
<div style="left:37px;top:523px;width:1.5px;height:8px;background:#d0d0d0;"></div>
<div style="left:19px;top:530px;width:19.5px;height:1px;background:#808080;"></div>
<div style="left:19px;top:542px;width:21px;height:10px;background:#080808;"></div>
<div style="left:19px;top:543px;width:19px;height:1px;background:#c4c4c4;"></div>
<div style="left:37px;top:543px;width:1.5px;height:8px;background:#d0d0d0;"></div>
<div style="left:19px;top:550px;width:19.5px;height:1px;background:#808080;"></div>
<div style="left:19px;top:572px;width:21px;height:10px;background:#080808;"></div>
<div style="left:19px;top:573px;width:19px;height:1px;background:#c4c4c4;"></div>
<div style="left:37px;top:573px;width:1.5px;height:8px;background:#d0d0d0;"></div>
<div style="left:19px;top:580px;width:19.5px;height:1px;background:#808080;"></div>
<div class="t" style="left:41px;top:361px;font-size:9px;line-height:12px;color:#a02a38;-webkit-text-stroke-width:.1px;">C5</div>
<div class="t" style="left:41px;top:481px;font-size:9px;line-height:12px;color:#a02a38;-webkit-text-stroke-width:.1px;">C4</div>
<div style="left:3px;top:586px;width:1114px;height:1px;background:#23262e;"></div>
<div style="left:4px;top:587px;width:1113px;height:15px;background:#262a32;"></div>
<div style="left:4px;top:587px;width:17px;height:15px;background:#434b57;"></div>
<div style="left:21px;top:587px;width:17px;height:15px;background:#6b7d90;"></div>
<svg style="left:9px;top:591px" width="7" height="7"><path d="M5 0.500 L1.500 3.500 L5 6.500" stroke="#d0d6de" stroke-width="1.800" fill="none"/></svg>
<div style="left:3px;top:602px;width:1114px;height:2px;background:#16181d;"></div>
<div style="left:3px;top:604px;width:1114px;height:3.5px;background:#3c4148;"></div>
<div style="left:3px;top:607.5px;width:1114px;height:1.5px;background:#08090b;"></div>
<div style="left:3px;top:609px;width:1114px;height:18px;background:#23272f;"></div>
<div style="left:3px;top:627px;width:1114px;height:1px;background:#08090b;"></div>
<div style="left:3px;top:628px;width:1114px;height:2px;background:#3a3f46;"></div>
<div class="bb" style="left:5px;top:609px;width:26px;height:18px;"><svg width="26" height="18" style="left:0;top:0"><path d="M2 3.500h12M2 13.500h12" stroke="#f0f0f0" stroke-dasharray="1 1" shape-rendering="crispEdges"/><path d="M2.500 3v11M13.500 3v11" stroke="#f0f0f0" stroke-dasharray="1 1" shape-rendering="crispEdges"/><path d="M15 4 L15 13 L17 11 L18.500 14.500 L20 14 L18.500 10.500 L21 10.500 Z" fill="#fff"/></svg></div>
<div class="bbb" style="left:33px;top:609px;width:30px;height:18px;"><svg width="30" height="18" style="left:0;top:0"><path d="M5 13 L26 4" stroke="#a8c8ee" stroke-width="1.200"/></svg></div>
<div class="bb" style="left:65px;top:609px;width:10px;height:18px;"><svg width="10" height="18" style="left:0;top:0"><path d="M1.500 6 H8.500 L5 10 Z" fill="#e0e0e0"/></svg></div>
<div class="bb" style="left:77px;top:609px;width:141px;height:18px;"><div class="bt" style="left:10px;top:0;font-size:12.700px">Strip Chart</div><svg width="14" height="18" style="left:120px;top:0"><path d="M1 4.500 H12.500 L6.700 10.500 Z" fill="#d8d8d8"/></svg></div>
<div class="bb" style="left:221px;top:609px;width:58px;height:18px;"><div class="bt" style="left:5px;top:0;font-size:12.600px">Interval</div></div>
<div style="left:280px;top:610px;width:33px;height:17px;background:#fff;"><div class="t" style="left:0;top:1px;width:29px;text-align:right;color:#000;font-size:12px;transform:scaleX(.82);transform-origin:100% 0">30</div></div>
<div style="left:313px;top:610px;width:16px;height:17px;background:#d8d8d8;border:1px solid #aaa;"><svg width="14" height="15" style="left:0;top:0"><path d="M4 5.500 L7 2 L10 5.500 Z M4 9.500 L7 13 L10 9.500 Z" fill="#111"/><path d="M0 7.500h14" stroke="#aaa"/></svg></div>
<div class="bb" style="left:331px;top:609px;width:107px;height:18px;"><div class="bt" style="left:3px;top:0;font-size:12px">Track</div><div class="bt" style="left:44px;top:0;font-size:12px">:</div><div class="bt" style="left:0;top:0;width:97px;text-align:right">6</div></div>
<div class="bbb" style="left:441px;top:609px;width:26px;height:18px;"><svg width="26" height="18" style="left:-1px;top:-1px"><path d="M4.500 15 V11.300 H10.500 L15.500 6.500 H22.500 V15 Z" fill="#e0e0e0"/></svg></div>
<div class="bb" style="left:469px;top:609px;width:26px;height:18px;"><svg width="26" height="18" style="left:-1px;top:-1px"><path d="M6 12 H10.300 L15.800 6.700 H21" stroke="#e0e0e0" stroke-width="1.300" fill="none"/><rect x="3.200" y="10.500" width="3" height="3" fill="#e0e0e0"/><rect x="20.300" y="5.200" width="3" height="3" fill="#e0e0e0"/></svg></div>
<div class="bb" style="left:497px;top:609px;width:26px;height:18px;"><svg width="26" height="18" style="left:-1px;top:-1px"><path d="M3.300 14.900 H6.200 L10.300 5.200 L10.800 14.900 H24" stroke="#e0e0e0" stroke-width="1.100" fill="none"/></svg></div>
<div class="bbb" style="left:525px;top:609px;width:26px;height:18px;"><svg width="26" height="18" style="left:-1px;top:-1px"><path d="M3.300 14.900 H6 L10.500 5.900 H23" stroke="#cfe0f4" stroke-width="1.100" fill="none"/></svg></div>
<div class="bb" style="left:553px;top:609px;width:26px;height:18px;"><svg width="26" height="18" style="left:-1px;top:-1px"><path d="M6.700 4v11.500" stroke="#e0e0e0" stroke-width="1.300"/><path d="M20.300 9.800H11.500" stroke="#e0e0e0" stroke-width="1.400" fill="none"/><path d="M10 9.800 L14 7.200 V12.400 Z" fill="#e0e0e0"/></svg></div>
<div class="bb" style="left:581px;top:609px;width:26px;height:18px;"><svg width="26" height="18" style="left:-1px;top:-1px"><path d="M7 4.300 H19.500 L14.500 10 V15 L12 15.300 V10 Z" fill="#e0e0e0"/></svg></div>
<div class="bb" style="left:629px;top:609px;width:26px;height:18px;"><svg width="26" height="18" style="left:-1px;top:-1px"><rect x="4" y="8" width="20" height="4.500" fill="none" stroke="#e0e0e0" stroke-width="1"/><path d="M8 8v4.500M4 12.500V15H7" stroke="#e0e0e0" stroke-width="1" fill="none"/><path d="M8 8 C10 5 13 4 15 8 S20 9 23.800 5.500" stroke="#e0e0e0" stroke-width="1" fill="none"/></svg></div>
</div></body></html>
